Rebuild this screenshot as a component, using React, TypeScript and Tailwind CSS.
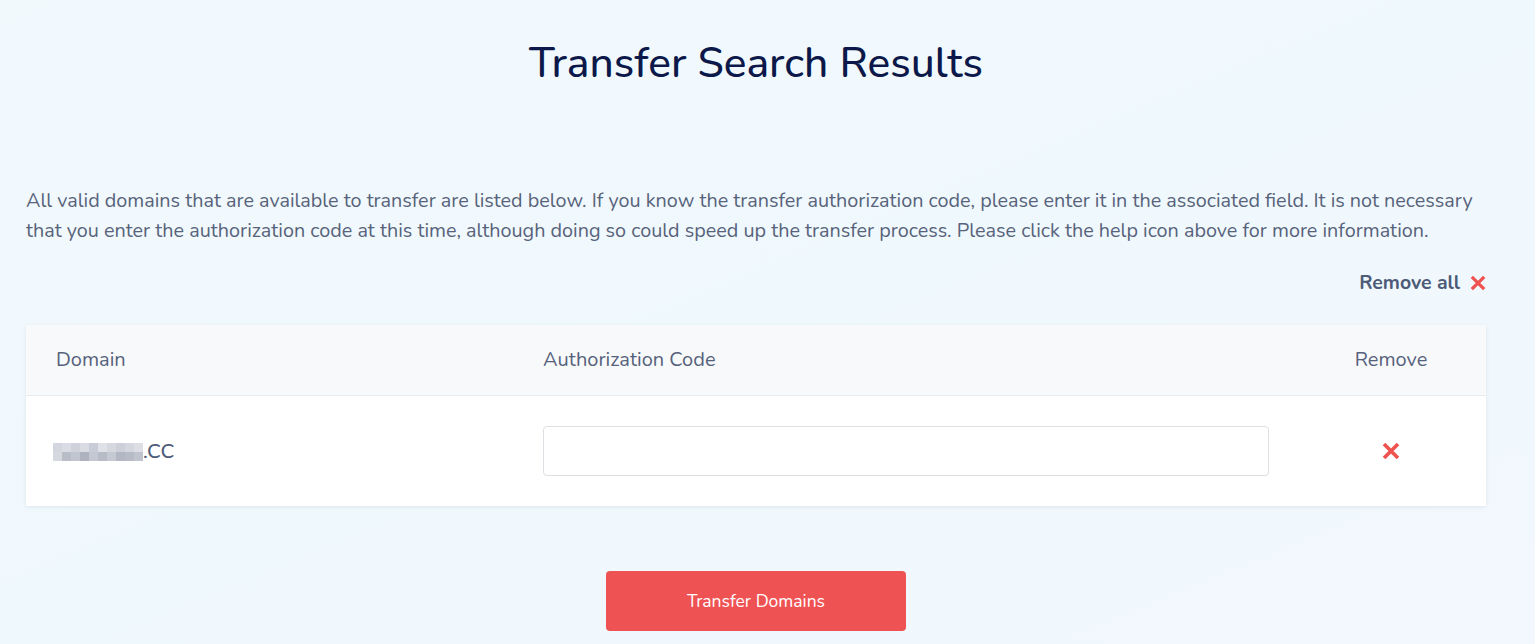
import React from "react";

const XIcon = ({ size = 16 }: { size?: number }) => (
  <svg width={size} height={size} viewBox="0 0 16 16" fill="none">
    <path d="M1.8 1.8 L14.2 14.2 M14.2 1.8 L1.8 14.2" stroke="#ef5350" strokeWidth="3.3" strokeLinecap="butt" />
  </svg>
);

const blur = [
  ["#d3d6de", "#d9dce4", "#cfd2da", "#dadce3", "#c8ccd6", "#dfe1e7", "#d6d8df", "#cdd0d8", "#d4d7df", "#dcdee4"],
  ["#d5d8df", "#b9bdc8", "#c1c5cf", "#aeb3bf", "#c3c8d2", "#b7bcc7", "#c5c9d2", "#b2b7c3", "#b6bbc6", "#c0c4ce"],
];

export default function App() {
  return (
    <div
      className="w-[1535px] h-[644px] overflow-hidden bg-gradient-to-br from-[#f2f9fd] via-[#eff8fd] to-[#f2f8fd] text-[#56617a]"
      style={{ fontFamily: '"Nunito", "Lato", "Open Sans", sans-serif' }}
    >
      <div className="ml-[26px] w-[1460px] pt-[36px]">
        <h1 className="text-center text-[42.5px] leading-[54px] font-medium text-[#0c1849]">Transfer Search Results</h1>
        <p className="mt-[96px] text-[19.8px] leading-[30px] text-[#58637b]">
          All valid domains that are available to transfer are listed below. If you know the transfer authorization code, please enter it in the associated field. It is not necessary that you enter the authorization code at this time, although doing so could speed up the transfer process. Please click the help icon above for more information.
        </p>
        <div className="mt-[22px] flex justify-end">
          <button className="flex items-center gap-[10px] text-[19.5px] font-bold text-[#4d5b78]">
            Remove all <XIcon size={16} />
          </button>
        </div>
        <div className="mt-[28px] w-[1460px] bg-white shadow-[0_1px_4px_rgba(0,0,0,0.08)]">
          <div className="h-[71px] bg-[#f8f9fa] border-b border-[#e9ebee] flex items-center text-[20px] text-[#56627c]">
            <div className="w-[517px] pl-[30px]">Domain</div>
            <div className="flex-1">Authorization Code</div>
            <div className="w-[190px] text-center">Remove</div>
          </div>
          <div className="h-[110px] flex items-center">
            <div className="w-[517px] pl-[27px] flex items-end">
              <div className="flex flex-col">
                {blur.map((row, i) => (
                  <div key={i} className="flex">
                    {row.map((c, j) => (
                      <div key={j} className="w-[9px] h-[9px]" style={{ background: c }} />
                    ))}
                  </div>
                ))}
              </div>
              <span className="text-[20.5px] leading-[19px] text-[#4d5b78] font-medium">.CC</span>
            </div>
            <div className="flex-1">
              <input className="w-[726px] h-[50px] rounded-[4px] border border-[#dcdfe4] bg-white outline-none px-3" />
            </div>
            <div className="w-[190px] flex justify-center">
              <XIcon size={18} />
            </div>
          </div>
        </div>
        <div className="mt-[65px] flex justify-center">
          <button className="w-[300px] h-[60px] rounded-[4px] bg-[#ef5253] text-white text-[17.5px]">Transfer Domains</button>
        </div>
      </div>
    </div>
  );
}
